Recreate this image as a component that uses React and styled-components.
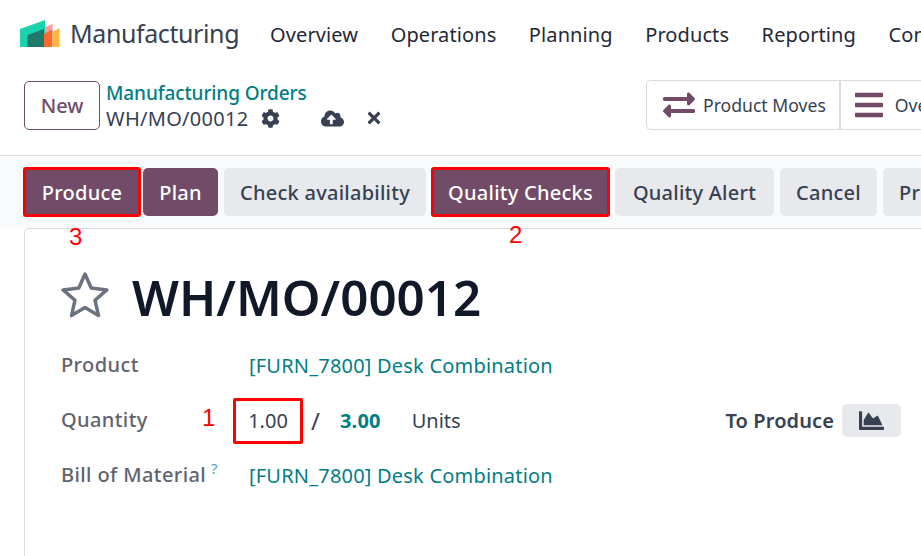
import React from "react";
import styled, { createGlobalStyle } from "styled-components";
import {
  FaCog,
  FaCloudUploadAlt,
  FaTimes,
  FaExchangeAlt,
  FaBars,
  FaChartArea,
} from "react-icons/fa";

const Global = createGlobalStyle`
  html, body { margin: 0; padding: 0; background: #fff; }
  body { font-family: "Noto Sans", "Open Sans", sans-serif; color: #374151; overflow: hidden; }
`;

const Page = styled.div`
  width: 921px;
  height: 556px;
  overflow: hidden;
  display: flex;
  flex-direction: column;
`;

const Nav = styled.nav`
  height: 70px;
  flex: none;
  box-sizing: border-box;
  display: flex;
  align-items: center;
  padding: 0 0 2px 20px;
  white-space: nowrap;
`;

const LogoMark = styled.svg`
  flex: none;
  margin-bottom: 2px;
`;

const Brand = styled.span`
  flex: none;
  font-size: 25px;
  letter-spacing: -0.4px;
  color: #374151;
  margin: 0 31px 2px 10px;
`;

const NavItem = styled.span`
  flex: none;
  font-size: 20px;
  letter-spacing: 0.1px;
  color: #1f2937;
  margin-right: 32.5px;
`;

const ControlPanel = styled.div`
  height: 86px;
  flex: none;
  box-sizing: border-box;
  border-bottom: 1px solid #d8dadd;
  display: flex;
  align-items: flex-start;
  padding: 11px 0 0 24px;
  white-space: nowrap;
`;

const NewButton = styled.button`
  flex: none;
  width: 76px;
  height: 49px;
  background: #fff;
  border: 1px solid #714b67;
  border-radius: 5px;
  color: #714b67;
  font: 500 20px "Noto Sans", sans-serif;
  padding: 0;
`;

const Crumbs = styled.div`
  flex: 0 0 540px;
  margin-left: 6px;
  display: flex;
  flex-direction: column;
`;

const CrumbLink = styled.a`
  color: #017e84;
  font-size: 19px;
  font-weight: 500;
  letter-spacing: -0.1px;
  line-height: 24px;
`;

const CrumbRow = styled.div`
  display: flex;
  align-items: center;
  height: 26px;
  font-size: 20px;
  letter-spacing: 0.3px;
  color: #374151;
`;

const CrumbIcon = styled.span`
  display: inline-flex;
  color: #374151;
  font-size: ${(p) => p.$size}px;
  margin-left: ${(p) => p.$gap}px;
`;

const Stats = styled.div`
  flex: none;
  display: flex;
  height: 50px;
  margin-top: -1px;
  box-sizing: border-box;
  border: 1px solid #d8dadd;
  border-right: none;
  border-radius: 5px 0 0 5px;
`;

const Stat = styled.div`
  display: flex;
  align-items: center;
  gap: 8px;
  padding: 0 13px 0 16px;
  font-size: 17.6px;
  color: #374151;
  & + & { border-left: 2px solid #d8dadd; padding-left: 12px; gap: 10px; }
  svg { color: #714b67; font-size: 32px; }
`;

const ActionBar = styled.div`
  height: 72px;
  flex: none;
  box-sizing: border-box;
  background: #f9fafb;
  display: flex;
  padding: 12px 0 0 24px;
  white-space: nowrap;
`;

const Action = styled.button`
  position: relative;
  flex: none;
  width: ${(p) => p.$w}px;
  height: 48px;
  margin-left: ${(p) => p.$gap || 0}px;
  border: none;
  border-radius: ${(p) => (p.$marked ? 2 : 5)}px;
  padding: 0 0 0 ${(p) => p.$pad || 0}px;
  text-align: ${(p) => (p.$pad ? "left" : "center")};
  font: 500 20px "Noto Sans", sans-serif;
  letter-spacing: 0.25px;
  background: ${(p) => (p.$primary ? "#714b67" : "#e7e9ed")};
  color: ${(p) => (p.$primary ? "#fff" : "#374151")};
  box-shadow: ${(p) => (p.$marked ? "inset 0 0 0 2px #ff0000, 0 0 0 1px #ff0000" : "none")};
`;

const Marker = styled.span`
  position: absolute;
  font: 400 24px "Liberation Sans", sans-serif;
  color: #ff0000;
  line-height: 28px;
  left: ${(p) => p.$x}px;
  top: ${(p) => p.$y}px;
`;

const Sheet = styled.div`
  position: relative;
  flex: 1;
  margin-left: 24px;
  background: #fff;
  border-left: 1px solid #d8dadd;
  border-top: 1px solid #d8dadd;
  border-top-left-radius: 5px;
  padding: 36px 0 0 36px;
  white-space: nowrap;
`;

const TitleRow = styled.div`
  display: flex;
  align-items: center;
  height: 62px;
  margin-bottom: 11px;
`;

const StarIcon = styled.svg`
  flex: none;
  margin-top: -2px;
`;

const Title = styled.h1`
  margin: 0 0 0 23px;
  font-size: 49.3px;
  font-weight: 600;
  color: #111827;
`;

const Field = styled.div`
  display: flex;
  align-items: center;
  height: 55px;
`;

const Label = styled.div`
  width: 188px;
  flex: none;
  margin-bottom: 3px;
  font-size: 20px;
  font-weight: 500;
  letter-spacing: 0.4px;
  color: #5f636f;
`;

const Help = styled.sup`
  color: #5c9fbd;
  font-size: 15px;
  margin-left: 5px;
  font-weight: 400;
  line-height: 0;
`;

const LinkValue = styled.a`
  color: #017e84;
  font-size: 20px;
  letter-spacing: 0.2px;
`;

const QuantityBox = styled.div`
  width: 70px;
  height: 46px;
  margin-left: -16px;
  box-sizing: border-box;
  border: 3px solid #ff0000;
  border-radius: 2px;
  display: flex;
  align-items: center;
  justify-content: center;
  font-size: 20px;
  color: #374151;
`;

const Slash = styled.span`
  font-size: 24px;
  margin: 0 20px 0 8px;
`;

const Planned = styled.span`
  color: #017e84;
  font-size: 20px;
  font-weight: 700;
  letter-spacing: 0.2px;
  margin-right: 31px;
`;

const Unit = styled.span`
  font-size: 20px;
  color: #374151;
`;

const ToProduce = styled.div`
  margin-left: auto;
  display: flex;
  align-items: center;
  gap: 8px;
  padding-right: 20px;
  font-size: 20px;
  font-weight: 600;
  letter-spacing: 0.1px;
  color: #374151;
`;

const ChartButton = styled.button`
  width: 59px;
  height: 33px;
  border: none;
  border-radius: 5px;
  background: #e7e9ed;
  color: #374151;
  font-size: 25px;
  display: flex;
  align-items: center;
  justify-content: center;
  padding: 0;
`;

function Logo() {
  return (
    <LogoMark width="40" height="27" viewBox="0 0 40 27">
      <polygon points="0,9 25,0 25,27 0,27" fill="#1ad3ae" />
      <polygon points="7.5,15 24,9 24,27 7.5,27" fill="#1f7a6b" />
      <polygon points="25,7 32.5,4 32.5,9 25,14" fill="#ff9aa2" />
      <polygon points="24,14 32.5,9 32.5,27 24,27" fill="#ff6b2c" />
      <polygon points="32.5,12 39.5,8 39.5,27 32.5,27" fill="#ffb73f" />
    </LogoMark>
  );
}

function Star() {
  return (
    <StarIcon width="48" height="46" viewBox="0 0 48 46">
      <polygon
        points="24,2 30.2,16 45.9,17.9 34,28.2 37.5,43.6 24,35.5 10.5,43.6 14,28.2 2.1,17.9 17.8,16"
        fill="none"
        stroke="#6b7280"
        strokeWidth="3.5"
        strokeLinejoin="round"
      />
    </StarIcon>
  );
}

export default function App() {
  return (
    <Page>
      <Global />
      <Nav>
        <Logo />
        <Brand>Manufacturing</Brand>
        {["Overview", "Operations", "Planning", "Products", "Reporting", "Configuration"].map((n) => (
          <NavItem key={n}>{n}</NavItem>
        ))}
      </Nav>
      <ControlPanel>
        <NewButton>New</NewButton>
        <Crumbs>
          <CrumbLink>Manufacturing Orders</CrumbLink>
          <CrumbRow>
            WH/MO/00012
            <CrumbIcon $size={19} $gap={12}><FaCog /></CrumbIcon>
            <CrumbIcon $size={23} $gap={41}><FaCloudUploadAlt /></CrumbIcon>
            <CrumbIcon $size={18} $gap={21}><FaTimes /></CrumbIcon>
          </CrumbRow>
        </Crumbs>
        <Stats>
          <Stat><FaExchangeAlt />Product Moves</Stat>
          <Stat><FaBars />Overview</Stat>
        </Stats>
      </ControlPanel>
      <ActionBar>
        <Action $primary $marked $w={116}>Produce</Action>
        <Action $primary $w={75} $gap={3}>Plan</Action>
        <Action $w={202} $gap={6}>Check availability</Action>
        <Action $primary $marked $w={177} $gap={6}>Quality Checks</Action>
        <Action $w={159} $gap={6}>Quality Alert</Action>
        <Action $w={97} $gap={6}>Cancel</Action>
        <Action $w={120} $gap={6} $pad={16}>Print</Action>
      </ActionBar>
      <Sheet>
        <Marker $x={44} $y={-6}>3</Marker>
        <Marker $x={484} $y={-8}>2</Marker>
        <TitleRow>
          <Star />
          <Title>WH/MO/00012</Title>
        </TitleRow>
        <Field>
          <Label>Product</Label>
          <LinkValue>[FURN_7800] Desk Combination</LinkValue>
        </Field>
        <Field>
          <Label>Quantity</Label>
          <Marker $x={177} $y={175}>1</Marker>
          <QuantityBox>1.00</QuantityBox>
          <Slash>/</Slash>
          <Planned>3.00</Planned>
          <Unit>Units</Unit>
          <ToProduce>
            To Produce
            <ChartButton><FaChartArea /></ChartButton>
          </ToProduce>
        </Field>
        <Field>
          <Label>Bill of Material<Help>?</Help></Label>
          <LinkValue>[FURN_7800] Desk Combination</LinkValue>
        </Field>
      </Sheet>
    </Page>
  );
}
